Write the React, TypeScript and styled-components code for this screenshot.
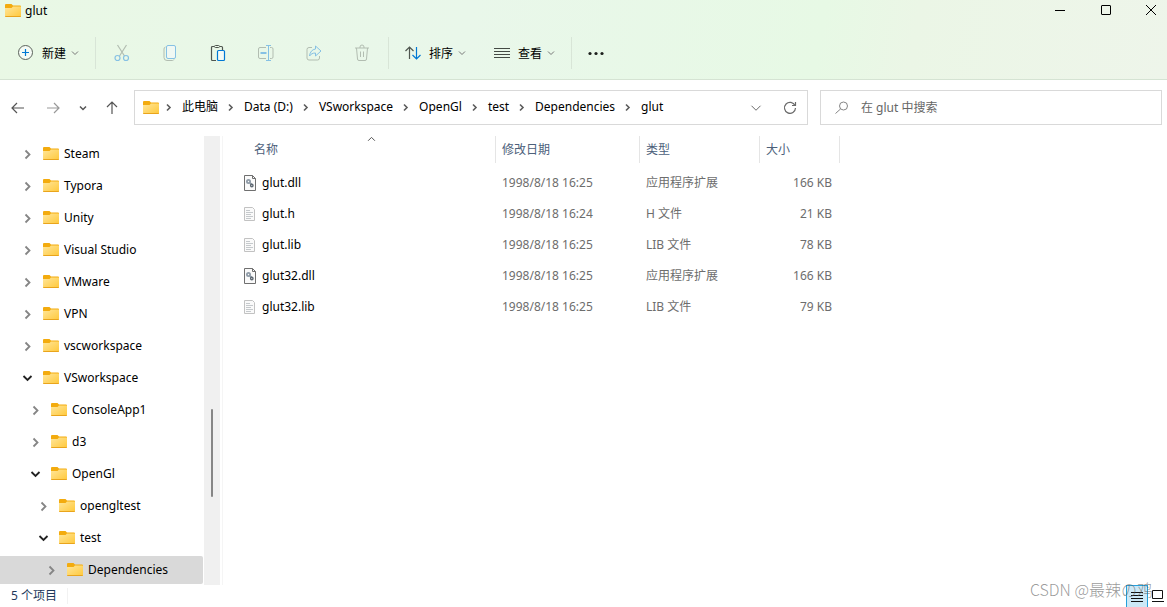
import React from 'react';
import styled, { createGlobalStyle } from 'styled-components';

const GlobalStyle = createGlobalStyle`
  * { box-sizing: border-box; }
  body {
    margin: 0;
    background: #fff;
    font-family: "Noto Sans", "Noto Sans CJK SC", sans-serif;
    font-size: 12px;
    line-height: 16px;
    color: #000;
  }
  button, input { font: inherit; color: inherit; }
  button { border: 0; padding: 0; background: none; cursor: pointer; }
  svg { display: block; flex: none; }
`;

const Window = styled.div`
  position: relative;
  display: flex;
  flex-direction: column;
  height: 100vh;
  overflow: hidden;
`;

const Header = styled.header`
  flex: none;
  border-bottom: 1px solid #d5e3d3;
  background: linear-gradient(100deg, #e9f8e5 0%, #e9f7ea 40%, #e7f9e5 70%, #ebf6e6 78%, #eef5ea 100%);
`;

const TitleBar = styled.div`
  display: flex;
  align-items: flex-start;
  justify-content: space-between;
  height: 27px;
`;

const Title = styled.h1`
  display: flex;
  align-items: center;
  gap: 4px;
  height: 21px;
  margin: 0;
  padding-left: 5px;
  font-size: 12px;
  font-weight: 400;
`;

const WindowControls = styled.div`
  display: flex;
`;

const WindowButton = styled.button`
  display: flex;
  align-items: center;
  justify-content: center;
  width: 46px;
  height: 20px;
  &:last-child { width: 44px; margin-right: -6px; }
`;

const CommandBar = styled.div`
  display: flex;
  align-items: center;
  height: 52px;
  padding-left: 4px;
`;

const MenuButton = styled.button`
  display: flex;
  align-items: center;
  height: 32px;
  padding: 0 14px;
`;

const MenuLabel = styled.span`
  margin: 0 5px 0 8px;
  padding-top: 2px;
`;

const CommandButton = styled.button`
  display: flex;
  align-items: center;
  justify-content: center;
  width: 48px;
  height: 32px;
`;

const MoreButton = styled(CommandButton)`
  width: 44px;
`;

const CommandDivider = styled.span`
  width: 1px;
  height: 32px;
  margin: 0 2px;
  background: #d8e5d7;
`;

const NavBar = styled.nav`
  display: flex;
  flex: none;
  align-items: center;
  padding: 10px 5px 11px 0;
`;

const NavButton = styled.button<{ $width: number }>`
  display: flex;
  align-items: center;
  justify-content: center;
  width: ${(p) => p.$width}px;
  height: 35px;
`;

const AddressBar = styled.div`
  display: flex;
  flex: 1;
  align-items: center;
  min-width: 0;
  height: 35px;
  margin: 0 12px 0 6px;
  padding: 0 0 0 8px;
  border: 1px solid #d9d9d9;
`;

const Crumbs = styled.ol`
  display: flex;
  flex: 1;
  align-items: center;
  min-width: 0;
  margin: 0;
  padding: 0 0 2px;
  overflow: hidden;
  list-style: none;
`;

const Crumb = styled.li`
  display: flex;
  align-items: center;
  white-space: nowrap;
`;

const CrumbLink = styled.a`
  color: #000;
  text-decoration: none;
`;

const AddressButton = styled.button`
  display: flex;
  align-items: center;
  justify-content: center;
  width: 34px;
  height: 33px;
`;

const SearchBox = styled.label`
  display: flex;
  align-items: center;
  gap: 12px;
  width: 342px;
  height: 35px;
  padding: 0 14px;
  border: 1px solid #d9d9d9;
`;

const SearchInput = styled.input`
  flex: 1;
  min-width: 0;
  padding: 0;
  border: 0;
  outline: 0;
  background: none;
  &::placeholder { color: #666; opacity: 1; }
`;

const Main = styled.main`
  display: flex;
  flex: 1;
  min-height: 0;
`;

const TreePane = styled.ul`
  flex: none;
  width: 204px;
  margin: 0;
  padding: 2px 1px 0 0;
  overflow: hidden;
  list-style: none;
`;

const TreeRow = styled.li`
  padding: 2px 0;
`;

const TreeItem = styled.button<{ $level: number; $selected?: boolean }>`
  display: flex;
  align-items: center;
  width: 100%;
  height: 28px;
  padding-left: ${(p) => 22 + p.$level * 8}px;
  border-radius: 0 2px 2px 0;
  background: ${(p) => (p.$selected ? '#d9d9d9' : 'transparent')};
  white-space: nowrap;
`;

const TreeLabel = styled.span`
  margin-left: 5px;
`;

const TreeArrow = styled.span`
  margin-right: 10px;
`;

const ScrollTrack = styled.div`
  display: flex;
  flex: none;
  flex-direction: column;
  width: 16px;
  padding-left: 7px;
  background: #f0f0f0;
  &::before { content: ""; flex: 273; }
  &::after { content: ""; flex: 88; }
`;

const ScrollThumb = styled.div`
  flex: 88;
  width: 2px;
  border-radius: 1px;
  background: #868686;
`;

const FilePane = styled.section`
  flex: 1;
  min-width: 0;
  margin-left: 2px;
  border-left: 1px solid #f5f5f5;
`;

const FileTable = styled.table`
  width: 617px;
  border-collapse: separate;
  border-spacing: 0;
  table-layout: fixed;
`;

const HeadCell = styled.th<{ $width: number; $first?: boolean }>`
  position: relative;
  width: ${(p) => p.$width}px;
  height: 27px;
  padding: 0 0 0 ${(p) => (p.$first ? 31 : 6)}px;
  border-right: 1px solid #e5e5e5;
  color: #4c607a;
  font-weight: 400;
  text-align: left;
`;

const SortMark = styled.span`
  position: absolute;
  top: -2px;
  left: 50%;
  padding-left: 8px;
`;

const Body = styled.tbody`
  &::before { content: ""; display: table-row; height: 4px; }
`;

const Cell = styled.td<{ $right?: boolean }>`
  height: 31px;
  padding: 0 ${(p) => (p.$right ? 8 : 0)}px 0 6px;
  color: #6d6d6d;
  text-align: ${(p) => (p.$right ? 'right' : 'left')};
  white-space: nowrap;
`;

const NameCell = styled(Cell)`
  padding-left: 19px;
  color: #000;
`;

const FileName = styled.div`
  display: flex;
  align-items: center;
  gap: 4px;
`;

const StatusBar = styled.footer`
  display: flex;
  flex: none;
  align-items: center;
  justify-content: space-between;
  height: 22px;
  padding-left: 11px;
`;

const ItemCount = styled.span`
  padding-right: 10px;
  border-right: 1px solid #f2f2f2;
  color: #1e395b;
`;

const ViewButtons = styled.div`
  display: flex;
`;

const ViewButton = styled.button<{ $active?: boolean }>`
  display: flex;
  align-items: flex-start;
  justify-content: center;
  width: ${(p) => (p.$active ? 22 : 19)}px;
  height: 22px;
  padding-top: 5px;
  border: ${(p) => (p.$active ? '1px solid #26a0da' : '0')};
  border-bottom: 0;
  background: ${(p) => (p.$active ? '#cce8f6' : 'transparent')};
`;

const Watermark = styled.span`
  position: absolute;
  right: 14px;
  bottom: 6px;
  color: rgba(90, 90, 90, 0.62);
  font-family: "Noto Sans CJK SC", sans-serif;
  font-size: 16px;
  font-weight: 300;
  line-height: 24px;
  pointer-events: none;
`;

const FolderIcon = () => (
  <svg width="16" height="16" viewBox="0 1 16 16" aria-hidden="true">
    <defs>
      <linearGradient id="folderFront" x1="0" y1="0" x2="1" y2="1">
        <stop offset="0" stopColor="#ffe69a" />
        <stop offset="1" stopColor="#ffc83a" />
      </linearGradient>
    </defs>
    <path d="M0 3a1 1 0 0 1 1-1h5.500l1.500 1.500H15a1 1 0 0 1 1 1V8H0z" fill="#f3ab0e" />
    <path d="M0 6h6.500L8 4.500h7.500a.5.5 0 0 1 .5.5v9a1 1 0 0 1-1 1H1a1 1 0 0 1-1-1z" fill="url(#folderFront)" />
    <path d="M0 14a1 1 0 0 0 1 1h14a1 1 0 0 0 1-1z" fill="#e9a41c" />
  </svg>
);

const Chevron = ({ dir, size = 8, color = '#777', weight = 1 }: {
  dir: 'up' | 'down' | 'right'; size?: number; color?: string; weight?: number;
}) => {
  const d = { up: 'M1 6l3-3 3 3', down: 'M1 2.500l3 3 3-3', right: 'M2.500 1l3 3-3 3' }[dir];
  return (
    <svg width={size} height={size} viewBox="0 0 8 8" fill="none" stroke={color} strokeWidth={(weight * 8) / size} aria-hidden="true">
      <path d={d} />
    </svg>
  );
};

const TreeChevron = ({ open }: { open?: boolean }) => (
  <svg width="11" height="12" viewBox="0 0 11 12" fill="none" stroke={open ? '#222' : '#858585'} strokeWidth="1.800" aria-hidden="true">
    <path d={open ? 'M1.500 4l4 4 4-4' : 'M3.500 2.500l4 4-4 4'} />
  </svg>
);

const CrumbArrow = ({ first }: { first?: boolean }) => (
  <svg width={first ? 23 : 26} height="10" viewBox={first ? '3 0 23 10' : '0 0 26 10'} fill="none" stroke="#5c5c5c" strokeWidth="1.600" aria-hidden="true">
    <path d="M11 2.500l3 3-3 3" />
  </svg>
);

const NewIcon = () => (
  <svg width="16" height="16" viewBox="0 0 16 16" fill="none" aria-hidden="true">
    <circle cx="7.500" cy="7.500" r="7" stroke="#5a625a" fill="#f5fbf5" />
    <path d="M7.500 4v7M4 7.500h7" stroke="#0078d4" strokeWidth="1.200" />
  </svg>
);

const CutIcon = () => (
  <svg width="16" height="18" viewBox="0 0 16 18" fill="none" aria-hidden="true">
    <path d="M3.500 1l7 11M12.500 1l-7 11" stroke="#b2bdb1" strokeWidth="1.200" />
    <circle cx="3.500" cy="14" r="2.500" stroke="#86c1e4" strokeWidth="1.200" />
    <circle cx="12" cy="14" r="2.500" stroke="#86c1e4" strokeWidth="1.200" />
  </svg>
);

const CopyIcon = () => (
  <svg width="16" height="18" viewBox="0 0 16 18" fill="none" aria-hidden="true">
    <path d="M3.500 3A2 2 0 0 0 2 5v8.500a3 3 0 0 0 3 3h5.500a2 2 0 0 0 1.500-1" stroke="#b2bdb1" />
    <rect x="4.500" y="1.500" width="9" height="13" rx="1.500" stroke="#86c1e4" fill="#f0f8f3" />
  </svg>
);

const PasteIcon = () => (
  <svg width="16" height="18" viewBox="0 0 16 18" fill="none" aria-hidden="true">
    <path d="M6 16.500H2.500a1 1 0 0 1-1-1V3.500a1 1 0 0 1 1-1H4M10 2.500h1.500a1 1 0 0 1 1 1V6" stroke="#4f564f" strokeWidth="1.200" />
    <rect x="4.500" y="1.500" width="5" height="2" rx="1" stroke="#4f564f" />
    <rect x="7.500" y="6.500" width="7" height="10" rx="1" stroke="#0078d4" strokeWidth="1.200" fill="#f3faf6" />
  </svg>
);

const RenameIcon = () => (
  <svg width="18" height="18" viewBox="0 0 18 18" fill="none" aria-hidden="true">
    <path d="M9 3.500H3a1.500 1.500 0 0 0-1.500 1.500v8A1.500 1.500 0 0 0 3 14.500h6M13 3.500h1.500A1.500 1.500 0 0 1 16 5v8a1.500 1.500 0 0 1-1.500 1.500H13" stroke="#b2bdb1" />
    <path d="M11.500 1.500v15M9 1.500h5M9 16.500h5" stroke="#86c1e4" />
    <path d="M3.500 9h6" stroke="#86c1e4" strokeWidth="2" />
  </svg>
);

const ShareIcon = () => (
  <svg width="16" height="18" viewBox="0 0 16 18" fill="none" strokeLinejoin="round" aria-hidden="true">
    <path d="M6 3.500H3a2 2 0 0 0-2 2V14a2 2 0 0 0 2 2h8.500a2 2 0 0 0 2-2v-2" stroke="#b2bdb1" />
    <path d="M9.500 2l5.500 5-5.500 5V9C6.500 9 5 10 3.500 12 4 8 6 5.500 9.500 5z" stroke="#86c1e4" />
  </svg>
);

const TrashIcon = () => (
  <svg width="16" height="18" viewBox="0 0 16 18" fill="none" stroke="#b2bdb1" aria-hidden="true">
    <path d="M1 4h14M6 4V3a2 2 0 0 1 4 0v1M2.500 4l1 11a1.500 1.500 0 0 0 1.500 1.500h6a1.500 1.500 0 0 0 1.500-1.500l1-11M6.500 7.500v5.500M9.500 7.500v5.500" />
  </svg>
);

const SortIcon = () => (
  <svg width="16" height="16" viewBox="0 0 16 16" fill="none" strokeWidth="1.200" aria-hidden="true">
    <path d="M4.500 14V2M.5 6l4-4 4 4" stroke="#4f564f" />
    <path d="M11.500 2v12M7.500 10l4 4 4-4" stroke="#0078d4" />
  </svg>
);

const LinesIcon = () => (
  <svg width="16" height="16" viewBox="0 0 16 16" stroke="#444a44" aria-hidden="true">
    <path d="M0 3.500h16M0 6.500h16M0 9.500h16M0 12.500h16" />
  </svg>
);

const DotsIcon = () => (
  <svg width="18" height="6" viewBox="0 0 18 6" fill="#1c1f1c" aria-hidden="true">
    <circle cx="3" cy="3.500" r="1.600" /><circle cx="9" cy="3.500" r="1.600" /><circle cx="15" cy="3.500" r="1.600" />
  </svg>
);

const Arrow = ({ turn, color }: { turn: number; color: string }) => (
  <svg width="14" height="14" viewBox="0 0 14 14" fill="none" stroke={color} strokeWidth="1.200" aria-hidden="true">
    <path d="M13 7H1M6 2L1 7l5 5" transform={`rotate(${turn} 7 7)`} />
  </svg>
);

const RefreshIcon = () => (
  <svg width="14" height="14" viewBox="0 0 14 14" fill="none" stroke="#6a6a6a" strokeWidth="1.200" aria-hidden="true">
    <path d="M12 4.500A5.500 5.500 0 1 0 12.500 7M12.500 1v3.500H9" />
  </svg>
);

const SearchIcon = () => (
  <svg width="14" height="14" viewBox="0 0 14 14" fill="none" stroke="#858585" aria-hidden="true">
    <circle cx="8.500" cy="5" r="4" /><path d="M5.500 8L.5 12.500" />
  </svg>
);

const DllIcon = () => (
  <svg width="16" height="16" viewBox="0 0 16 16" fill="none" aria-hidden="true">
    <path d="M2.500.5h8l3 3v12h-11z" fill="#fafafa" stroke="#6f6f6f" />
    <path d="M10.500.5v3h3" stroke="#6f6f6f" />
    <circle cx="6.500" cy="6.500" r="1.600" stroke="#8f9ba7" strokeWidth="1.800" />
    <path d="M8 8l1.500 1.500" stroke="#8f9ba7" strokeWidth="2" />
    <circle cx="9.800" cy="10.500" r="1.200" stroke="#5d6771" strokeWidth="1.400" />
  </svg>
);

const PageIcon = () => (
  <svg width="16" height="16" viewBox="0 0 16 16" fill="none" aria-hidden="true">
    <path d="M2.500 1.500h8l2 2v11h-10z" fill="#fafafa" stroke="#c2c2c2" />
    <path d="M4 4.500h4M4 6.500h7M4 8.500h5M4 10.500h7M4 12.500h5" stroke="#c5c9cc" />
  </svg>
);

const crumbs = ['此电脑', 'Data (D:)', 'VSworkspace', 'OpenGl', 'test', 'Dependencies', 'glut'];

const tree = [
  { name: 'Steam', level: 0 },
  { name: 'Typora', level: 0 },
  { name: 'Unity', level: 0 },
  { name: 'Visual Studio', level: 0 },
  { name: 'VMware', level: 0 },
  { name: 'VPN', level: 0 },
  { name: 'vscworkspace', level: 0 },
  { name: 'VSworkspace', level: 0, open: true },
  { name: 'ConsoleApp1', level: 1 },
  { name: 'd3', level: 1 },
  { name: 'OpenGl', level: 1, open: true },
  { name: 'opengltest', level: 2 },
  { name: 'test', level: 2, open: true },
  { name: 'Dependencies', level: 3, selected: true },
];

const files = [
  { name: 'glut.dll', date: '1998/8/18 16:25', type: '应用程序扩展', size: '166 KB', dll: true },
  { name: 'glut.h', date: '1998/8/18 16:24', type: 'H 文件', size: '21 KB' },
  { name: 'glut.lib', date: '1998/8/18 16:25', type: 'LIB 文件', size: '78 KB' },
  { name: 'glut32.dll', date: '1998/8/18 16:25', type: '应用程序扩展', size: '166 KB', dll: true },
  { name: 'glut32.lib', date: '1998/8/18 16:25', type: 'LIB 文件', size: '79 KB' },
];

export default function App() {
  return (
    <>
      <GlobalStyle />
      <Window lang="zh-CN">
        <Header>
          <TitleBar>
            <Title><FolderIcon />glut</Title>
            <WindowControls>
              <WindowButton aria-label="最小化">
                <svg width="10" height="10" viewBox="0 0 10 10" stroke="#000"><path d="M0 5.500h10" /></svg>
              </WindowButton>
              <WindowButton aria-label="最大化">
                <svg width="10" height="10" viewBox="0 0 10 10" fill="none" stroke="#000"><rect x=".5" y=".5" width="9" height="9" rx=".5" /></svg>
              </WindowButton>
              <WindowButton aria-label="关闭">
                <svg width="10" height="10" viewBox="0 0 10 10" stroke="#000"><path d="M0 0l10 10M10 0L0 10" /></svg>
              </WindowButton>
            </WindowControls>
          </TitleBar>
          <CommandBar>
            <MenuButton><NewIcon /><MenuLabel>新建</MenuLabel><Chevron dir="down" /></MenuButton>
            <CommandDivider />
            <CommandButton aria-label="剪切"><CutIcon /></CommandButton>
            <CommandButton aria-label="复制"><CopyIcon /></CommandButton>
            <CommandButton aria-label="粘贴"><PasteIcon /></CommandButton>
            <CommandButton aria-label="重命名"><RenameIcon /></CommandButton>
            <CommandButton aria-label="共享"><ShareIcon /></CommandButton>
            <CommandButton aria-label="删除"><TrashIcon /></CommandButton>
            <CommandDivider />
            <MenuButton><SortIcon /><MenuLabel>排序</MenuLabel><Chevron dir="down" /></MenuButton>
            <MenuButton><LinesIcon /><MenuLabel>查看</MenuLabel><Chevron dir="down" /></MenuButton>
            <CommandDivider />
            <MoreButton aria-label="更多"><DotsIcon /></MoreButton>
          </CommandBar>
        </Header>

        <NavBar>
          <NavButton $width={36} aria-label="后退"><Arrow turn={0} color="#555" /></NavButton>
          <NavButton $width={34} aria-label="前进"><Arrow turn={180} color="#999" /></NavButton>
          <NavButton $width={26} aria-label="最近的位置"><Chevron dir="down" color="#555" weight={1.5} /></NavButton>
          <NavButton $width={32} aria-label="向上"><Arrow turn={90} color="#555" /></NavButton>
          <AddressBar>
            <FolderIcon />
            <Crumbs>
              {crumbs.map((name, i) => (
                <Crumb key={name}>
                  <CrumbArrow first={i === 0} />
                  <CrumbLink href="#">{name}</CrumbLink>
                </Crumb>
              ))}
            </Crumbs>
            <AddressButton aria-label="以前的位置"><Chevron dir="down" size={12} color="#6a6a6a" /></AddressButton>
            <AddressButton aria-label="刷新"><RefreshIcon /></AddressButton>
          </AddressBar>
          <SearchBox>
            <SearchIcon />
            <SearchInput type="text" placeholder="在 glut 中搜索" aria-label="在 glut 中搜索" />
          </SearchBox>
        </NavBar>

        <Main>
          <TreePane>
            {tree.map((item) => (
              <TreeRow key={item.name}>
                <TreeItem $level={item.level} $selected={item.selected} aria-expanded={!!item.open}>
                  <TreeArrow><TreeChevron open={item.open} /></TreeArrow>
                  <FolderIcon />
                  <TreeLabel>{item.name}</TreeLabel>
                </TreeItem>
              </TreeRow>
            ))}
          </TreePane>
          <ScrollTrack><ScrollThumb /></ScrollTrack>
          <FilePane>
            <FileTable>
              <thead>
                <tr>
                  <HeadCell $width={273} $first>名称<SortMark><Chevron dir="up" size={9} color="#555" /></SortMark></HeadCell>
                  <HeadCell $width={144}>修改日期</HeadCell>
                  <HeadCell $width={120}>类型</HeadCell>
                  <HeadCell $width={80}>大小</HeadCell>
                </tr>
              </thead>
              <Body>
                {files.map((f) => (
                  <tr key={f.name}>
                    <NameCell><FileName>{f.dll ? <DllIcon /> : <PageIcon />}{f.name}</FileName></NameCell>
                    <Cell>{f.date}</Cell>
                    <Cell>{f.type}</Cell>
                    <Cell $right>{f.size}</Cell>
                  </tr>
                ))}
              </Body>
            </FileTable>
          </FilePane>
        </Main>

        <StatusBar>
          <ItemCount>5 个项目</ItemCount>
          <ViewButtons>
            <ViewButton $active aria-label="详细信息">
              <svg width="12" height="12" viewBox="0 0 12 12" stroke="#111" aria-hidden="true"><path d="M0 1.500h12M0 4.500h12M0 7.500h12M0 10.500h12" /></svg>
            </ViewButton>
            <ViewButton aria-label="大缩略图">
              <svg width="13" height="12" viewBox="0 0 13 12" fill="none" stroke="#111" aria-hidden="true"><path d="M1.500.5h10v8h-10zM1 11.500h12" /></svg>
            </ViewButton>
          </ViewButtons>
        </StatusBar>
        <Watermark>CSDN @最辣の鸡</Watermark>
      </Window>
    </>
  );
}
